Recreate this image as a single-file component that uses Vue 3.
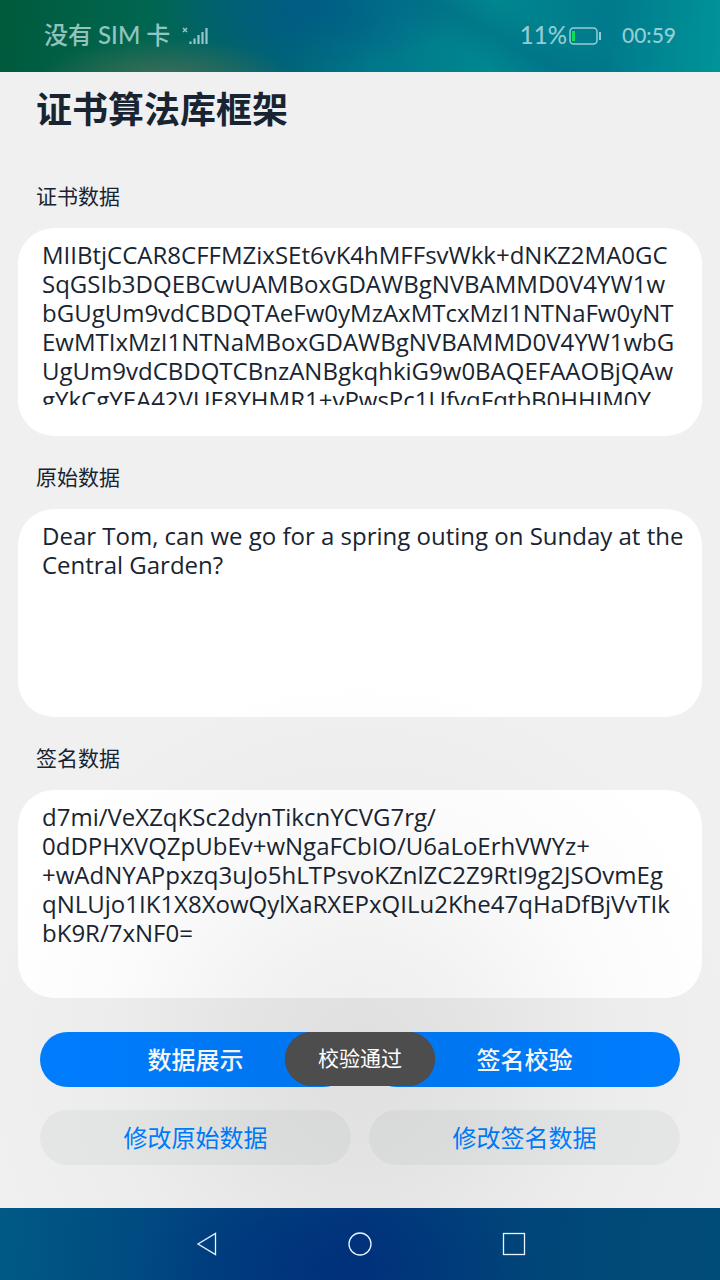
<script setup>
import { ref } from 'vue'

const fields = ref([
  {
    id: 'cert',
    label: '证书数据',
    value: [
      'MIIBtjCCAR8CFFMZixSEt6vK4hMFFsvWkk+dNKZ2MA0GC',
      'SqGSIb3DQEBCwUAMBoxGDAWBgNVBAMMD0V4YW1w',
      'bGUgUm9vdCBDQTAeFw0yMzAxMTcxMzI1NTNaFw0yNT',
      'EwMTIxMzI1NTNaMBoxGDAWBgNVBAMMD0V4YW1wbG',
      'UgUm9vdCBDQTCBnzANBgkqhkiG9w0BAQEFAAOBjQAw',
      'gYkCgYEA42VUE8YHMR1+vPwsPc1UfvqFqtbB0HHJM0Y'
    ].join('\n')
  },
  {
    id: 'origin',
    label: '原始数据',
    value: 'Dear Tom, can we go for a spring outing on Sunday at the\nCentral Garden?'
  },
  {
    id: 'sign',
    label: '签名数据',
    value: [
      'd7mi/VeXZqKSc2dynTikcnYCVG7rg/',
      '0dDPHXVQZpUbEv+wNgaFCbIO/U6aLoErhVWYz+',
      '+wAdNYAPpxzq3uJo5hLTPsvoKZnlZC2Z9RtI9g2JSOvmEg',
      'qNLUjo1IK1X8XowQylXaRXEPxQILu2Khe47qHaDfBjVvTIk',
      'bK9R/7xNF0='
    ].join('\n')
  }
])
</script>

<template>
  <div class="screen">
    <header class="status">
      <span class="sim">没有 SIM 卡</span>
      <svg class="signal" width="26" height="20" viewBox="0 0 26 20" aria-hidden="true">
        <path d="M1 2l4 4M5 2l-4 4" stroke="currentColor" stroke-width="1.5" />
        <path d="M8.500 15.500V18M12.500 12.500V18M16.500 9v9M20.500 6v12M24.500 2v16" stroke="currentColor" stroke-width="2.200" />
      </svg>
      <span class="battery-text">11%</span>
      <svg class="battery" width="33" height="18" viewBox="0 0 33 18" aria-hidden="true">
        <rect x="1" y="1" width="27" height="16" rx="3.5" fill="none" stroke="currentColor" stroke-width="1.5" />
        <rect x="3" y="4" width="3" height="10" fill="#0be05a" />
        <path d="M31 5v8" stroke="currentColor" stroke-width="2" />
      </svg>
      <time class="clock">00:59</time>
    </header>

    <main class="page">
      <h1>证书算法库框架</h1>
      <section v-for="field in fields" :key="field.id" class="field">
        <label :for="field.id">{{ field.label }}</label>
        <div class="card">
          <textarea :id="field.id" v-model="field.value" spellcheck="false" wrap="off"></textarea>
        </div>
      </section>
      <div class="actions">
        <button type="button" class="primary">数据展示</button>
        <button type="button" class="primary">签名校验</button>
        <button type="button" class="secondary">修改原始数据</button>
        <button type="button" class="secondary">修改签名数据</button>
        <div class="toast" role="status">校验通过</div>
      </div>
    </main>

    <nav class="navbar">
      <button type="button" aria-label="返回">
        <svg width="24" height="24" viewBox="0 0 24 24"><path d="M21.500 1.500v21L4 12z" /></svg>
      </button>
      <button type="button" aria-label="主页">
        <svg width="24" height="24" viewBox="0 0 24 24"><circle cx="12" cy="12" r="11" /></svg>
      </button>
      <button type="button" aria-label="最近任务">
        <svg width="24" height="24" viewBox="0 0 24 24"><rect x="1.500" y="1.500" width="21" height="21" /></svg>
      </button>
    </nav>
  </div>
</template>

<style>
body {
  margin: 0;
}
</style>

<style scoped>
.screen {
  display: flex;
  flex-direction: column;
  min-height: 100vh;
  font-family: "Open Sans", "Noto Sans CJK SC", sans-serif;
  color: #182431;
}

.status {
  display: flex;
  align-items: center;
  box-sizing: border-box;
  height: 72px;
  padding: 0 44px;
  font-family: Lato, "Noto Sans CJK SC", sans-serif;
  font-size: 24px;
  line-height: 28px;
  font-weight: 500;
  color: rgba(215, 240, 245, 0.7);
  background:
    radial-gradient(ellipse 130px 44px at 165px 82px, rgba(76, 110, 90, 0.9), transparent),
    radial-gradient(ellipse 150px 60px at 310px 10px, rgba(0, 90, 135, 0.8), transparent),
    linear-gradient(28deg, transparent 58%, rgba(0, 105, 130, 0.45) 66%, transparent 74%),
    linear-gradient(95deg, #005a3c 0%, #00664f 20%, #006478 40%, #00778a 52%, #008790 68%, #007a8c 84%, #009499 100%);
}

.sim,
.battery-text,
.clock {
  padding-bottom: 2px;
}

.signal {
  margin-left: 12px;
}

.battery-text {
  margin-left: auto;
}

.battery {
  margin: 0 20px 0 2px;
}

.clock {
  font-size: 21px;
}

.page {
  position: relative;
  flex: 1;
  overflow: hidden;
  padding: 12px 18px 43px;
  background: #f0f0f0;
}

h1 {
  margin: 0 18px 43px;
  font-size: 36px;
  line-height: 52px;
  font-weight: 700;
}

.field {
  margin-bottom: 24px;
}

label {
  display: block;
  padding: 2px 18px 17px;
  font-size: 21px;
  line-height: 30px;
}

.card {
  padding: 12px 18px 31px 24px;
  border-radius: 36px;
  background: #fff;
}

textarea {
  display: block;
  box-sizing: border-box;
  width: 100%;
  height: 165px;
  padding: 0;
  border: 0;
  outline: 0;
  overflow: hidden;
  resize: none;
  background: transparent;
  color: inherit;
  font-family: inherit;
  font-size: 24px;
  line-height: 29px;
}

.actions {
  position: relative;
  display: grid;
  grid-template-columns: 1fr 1fr;
  gap: 23px 18px;
  margin: 34px 22px 0;
}

.actions button {
  height: 55px;
  padding: 0 0 2px;
  border: 0;
  border-radius: 28px;
  font-family: inherit;
  font-size: 24px;
  font-weight: 500;
}

.actions .primary {
  background: #007dff;
  color: #fff;
}

.actions .secondary {
  background: #e6e8e7;
  color: #007dff;
  font-weight: 400;
}

.toast {
  position: absolute;
  top: 0;
  left: 50%;
  transform: translateX(-50%);
  width: 150px;
  height: 54px;
  border-radius: 27px;
  background: #4d4d4d;
  color: #fff;
  font-size: 21px;
  line-height: 52px;
  text-align: center;
}

.toast::before {
  content: "";
  position: absolute;
  z-index: -1;
  inset: -360px -310px;
  border-radius: 27px;
  pointer-events: none;
  background: radial-gradient(closest-side, rgba(0, 0, 0, 0.07), rgba(0, 0, 0, 0.05) 30%, rgba(0, 0, 0, 0.015) 65%, transparent);
}

.toast::after {
  content: "";
  position: absolute;
  z-index: -1;
  inset: 0;
  border-radius: 27px;
  background: #4d4d4d;
}

.navbar {
  display: flex;
  align-items: center;
  justify-content: center;
  gap: 130px;
  height: 72px;
  background:
    radial-gradient(ellipse 200px 100px at 340px 60px, rgba(0, 44, 122, 0.7), transparent),
    linear-gradient(95deg, #005a85 0%, #004480 28%, #003a7d 50%, #00437a 65%, #004a78 85%, #004c78 100%);
}

.navbar button {
  display: flex;
  padding: 0;
  border: 0;
  background: transparent;
}

.navbar svg {
  fill: none;
  stroke: #e8f4ff;
  stroke-width: 1.300;
}
</style>
